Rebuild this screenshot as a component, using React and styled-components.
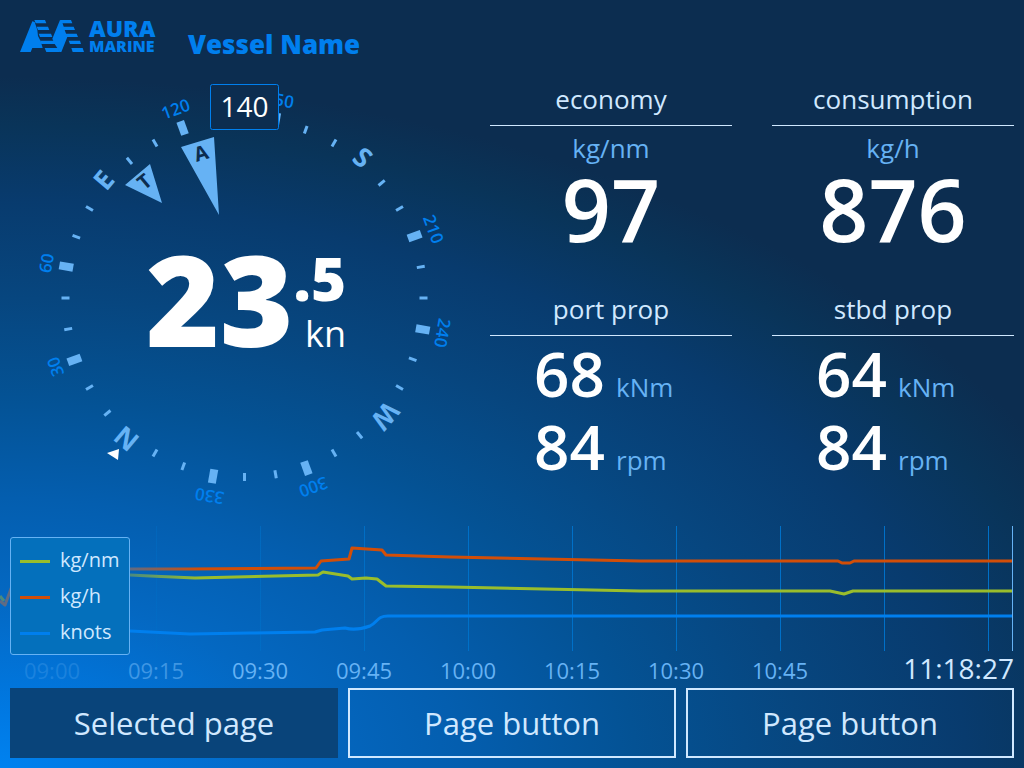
import React from "react";
import styled, { createGlobalStyle } from "styled-components";

const text = '"Open Sans", "Noto Sans", sans-serif';

const GlobalStyle = createGlobalStyle`
  * { box-sizing: border-box; }
  body {
    margin: 0;
    font-family: ${text};
    color: #d0e8ff;
    background: #0c2d50;
  }
`;

const Screen = styled.div`
  display: flex;
  flex-direction: column;
  min-height: 100vh;
  padding: 18px 10px 10px;
  overflow: hidden;
  background: radial-gradient(
    ellipse 115% 90% at 0% 100%,
    #0082f0 0%,
    #0079e3 8%,
    #0468c2 25%,
    #045eaf 39%,
    #045294 54%,
    #07467f 68%,
    #083b6e 82%,
    #093459 93%,
    #0c2d50 100%
  );
`;

const Header = styled.header`
  display: flex;
  height: 42px;
  padding-left: 10px;
  color: #007fee;
`;

const LogoMark = styled.svg`
  width: 64px;
  height: 36px;
  fill: currentColor;
`;

const Wordmark = styled.div`
  width: 68px;
  margin-left: 5px;
  font-weight: 800;
`;

const WordLine = styled.div`
  font-size: ${(p) => p.$size}px;
  line-height: ${(p) => p.$height}px;
`;

const Title = styled.h1`
  margin: 8px 0 0 31px;
  font-size: 26px;
  line-height: 36px;
  font-weight: 800;
`;

const Main = styled.main`
  display: grid;
  grid-template-columns: 480fr 524fr;
  flex: 1;
`;

const Compass = styled.section`
  display: grid;
  grid-template-columns: 470px;
  grid-template-rows: 456px;
`;

const Dial = styled.svg`
  grid-area: 1 / 1;
  width: 470px;
  height: 456px;
`;

const Speed = styled.div`
  grid-area: 1 / 1;
  display: flex;
  justify-content: center;
  padding: 172px 0 0 2px;
  color: #fff;
`;

const SpeedWhole = styled.span`
  font: 800 126px/132px ${text};
`;

const SpeedSide = styled.div`
  display: flex;
  flex-direction: column;
  align-items: flex-end;
  padding-top: 14px;
`;

const SpeedTenth = styled.span`
  font: 800 60px/64px ${text};
`;

const SpeedUnit = styled.span`
  font: 400 36px/48px ${text};
`;

const Readings = styled.section`
  display: grid;
  grid-template-columns: 1fr 1fr;
  grid-template-rows: 210px 1fr;
  column-gap: 40px;
  padding-top: 20px;
`;

const Reading = styled.article`
  display: flex;
  flex-direction: column;
  align-items: center;
`;

const ReadingName = styled.h2`
  align-self: stretch;
  margin: 0;
  height: 46px;
  border-bottom: 1px solid #d0e8ff;
  font: 400 26px/38px ${text};
  text-align: center;
`;

const Unit = styled.span`
  font: 400 26px/44px ${text};
  color: #66b2f4;
`;

const BigValue = styled.span`
  font: 600 86px/78px ${text};
  color: #fff;
`;

const ValueLine = styled.div`
  display: grid;
  grid-template-columns: 72px 72px;
  column-gap: 10px;
  align-items: baseline;
  height: 73px;
`;

const Value = styled.span`
  font: 600 62px/74px ${text};
  color: #fff;
`;

const History = styled.section`
  display: grid;
  grid-template-rows: 126px 36px;
  margin: 0 -10px;
`;

const Plot = styled.svg`
  grid-area: 1 / 1;
  width: 100%;
  height: 126px;
`;

const Legend = styled.ul`
  grid-area: 1 / 1;
  justify-self: start;
  z-index: 1;
  display: flex;
  flex-direction: column;
  width: 120px;
  height: 118px;
  margin: 11px 0 0 10px;
  padding: 3px 9px;
  list-style: none;
  border: 1px solid #66b2f4;
  border-radius: 3px;
  background: #0470bc;
`;

const LegendItem = styled.li`
  display: flex;
  align-items: center;
  gap: 10px;
  height: 36px;
  font-size: 20px;
`;

const Swatch = styled.i`
  width: 30px;
  height: 3px;
  margin-top: 4px;
  background: ${(p) => p.$color};
`;

const Times = styled.div`
  grid-area: 2 / 1;
  display: flex;
  justify-content: space-between;
  align-items: baseline;
  height: 36px;
  padding-right: 10px;
`;

const TimeRow = styled.div`
  display: grid;
  grid-template-columns: repeat(8, 104px);
  font: 400 22px/32px ${text};
  text-align: center;
  color: #66b2f4;
`;

const Tick = styled.span`
  opacity: ${(p) => p.$fade};
`;

const Clock = styled.time`
  font: 400 28px/32px ${text};
`;

const Pages = styled.nav`
  display: grid;
  grid-template-columns: repeat(3, 1fr);
  gap: 10px;
`;

const PageButton = styled.button`
  height: 70px;
  padding: 0;
  border: 2px solid ${(p) => (p.$selected ? "#09447a" : "#d0e8ff")};
  background: ${(p) => (p.$selected ? "#09447a" : "transparent")};
  color: #d0e8ff;
  font: 400 31px/40px ${text};
`;

const CX = 234.5;
const CY = 238;
const HEADING = 140;
const bearings = Array.from({ length: 36 }, (_, i) => i * 10);
const cardinals = { 0: "N", 90: "E", 180: "S", 270: "W" };

function CompassDial() {
  return (
    <Dial viewBox="0 0 470 456" role="img" aria-label="Heading 140">
      {bearings.map((b) => {
        const turn = `rotate(${b - HEADING} ${CX} ${CY})`;
        if (cardinals[b]) {
          return (
            <text key={b} transform={turn} x={CX} y={CY - 174} textAnchor="middle" fontSize="27" fontWeight="700" fill="#66b2f4">
              {cardinals[b]}
            </text>
          );
        }
        if (b % 30 === 0) {
          return (
            <g key={b} transform={turn}>
              <rect x={CX - 4} y={CY - 188} width="8" height="14" fill="#66b2f4" />
              <text x={CX} y={CY - 195} textAnchor="middle" fontSize="17" fontWeight="600" fill="#007fee">
                {b}
              </text>
            </g>
          );
        }
        return <rect key={b} transform={turn} x={CX - 1.5} y={CY - 183} width="3" height="8" fill="#66b2f4" />;
      })}
      <path d="M171 87 204 77 209 155Z M115 125 140 104 152 143Z" fill="#66b2f4" />
      <g fill="#0c2d50" fontSize="20" fontWeight="700" textAnchor="middle">
        <text transform="translate(193 100) rotate(-17)">A</text>
        <text transform="translate(139 127) rotate(-40)">T</text>
      </g>
      <path d="M97 393 109 389 108 400Z" fill="#fff" />
      <rect x="200.5" y="24.5" width="68" height="45" rx="2" fill="#0c2d50" stroke="#007fee" />
      <text x="234.5" y="57" textAnchor="middle" fontSize="28" fill="#fff">
        {HEADING}
      </text>
    </Dial>
  );
}

function Logo() {
  return (
    <LogoMark viewBox="60 54 192 108" aria-hidden="true">
      <path d="M60 156 97 64 104 66 112 90 114 108 122 124 128 144H97L92 156Z" />
      <path d="M103 60H135L139 70H107ZM110 80H144L148 90H114ZM116 101H153L157 111H120ZM120 122H164L167 132H124ZM134 144H175L178 156H139Z" />
      <path d="M180 60H213L217 70H184ZM187 80H221L225 90H191ZM196 101H230L234 111H200ZM206 122H240L243 132H210ZM214 144H248L252 156H218Z" />
      <path d="M180 60 157 116 164 132 172 144 178 156H184L202 111 194 90 186 64Z" />
    </LogoMark>
  );
}

const series = {
  knots: "M130 105 L190 108 250 107 315 106 322 104 345 102 Q356 105 370 100 C378 96 377 90 388 90 H1012",
  consumption:
    "M0 75 5 79 12 60 M130 43 L190 43 316 42 321 35 349 33 352 22 382 24 386 29 450 31 640 35 H838 L842 37 H850 L854 35 H1012",
  economy:
    "M0 70 4 75 M130 49 L150 50 195 52 318 49 323 46 348 50 352 53 366 52 377 53 386 60 450 61 640 65 H830 L844 68 853 65 H1012",
};

const grid = [156, 260, 364, 468, 572, 676, 780, 884, 988];

function HistoryPlot() {
  return (
    <Plot viewBox="0 0 1024 126" preserveAspectRatio="none" aria-hidden="true">
      <defs>
        <linearGradient id="fade" gradientUnits="userSpaceOnUse" x1="120" x2="400" y1="0" y2="0">
          <stop offset="0" stopColor="#0070c8" stopOpacity="0.3" />
          <stop offset="1" stopColor="#0070c8" />
        </linearGradient>
        <linearGradient id="orange" gradientUnits="userSpaceOnUse" x1="130" x2="200" y1="0" y2="0">
          <stop offset="0" stopColor="#5f6b84" />
          <stop offset="1" stopColor="#d24e08" />
        </linearGradient>
        <linearGradient id="green" gradientUnits="userSpaceOnUse" x1="130" x2="200" y1="0" y2="0">
          <stop offset="0" stopColor="#4a8a80" />
          <stop offset="1" stopColor="#99bd2c" />
        </linearGradient>
      </defs>
      {grid.map((x) => (
        <rect key={x} x={x} y="0" width="1" height="125" fill="url(#fade)" />
      ))}
      <rect x="1012" y="0" width="1" height="125" fill="#66b2f4" />
      <g fill="none" strokeWidth="3" strokeLinejoin="round">
        <path d={series.knots} stroke="#007fee" />
        <path d={series.economy} stroke="url(#green)" />
        <path d={series.consumption} stroke="url(#orange)" />
      </g>
    </Plot>
  );
}

const times = [
  ["09:00", 0.25],
  ["09:15", 0.6],
  ["09:30", 1],
  ["09:45", 1],
  ["10:00", 1],
  ["10:15", 1],
  ["10:30", 1],
  ["10:45", 1],
];

const totals = [
  { name: "economy", unit: "kg/nm", value: 97 },
  { name: "consumption", unit: "kg/h", value: 876 },
];

const propellers = [
  { name: "port prop", torque: 68, speed: 84 },
  { name: "stbd prop", torque: 64, speed: 84 },
];

export default function App() {
  return (
    <>
      <GlobalStyle />
      <Screen>
        <Header>
          <Logo />
          <Wordmark>
            <WordLine $size={23} $height={20}>AURA</WordLine>
            <WordLine $size={16} $height={16}>MARINE</WordLine>
          </Wordmark>
          <Title>Vessel Name</Title>
        </Header>
        <Main>
          <Compass>
            <CompassDial />
            <Speed>
              <SpeedWhole>23</SpeedWhole>
              <SpeedSide>
                <SpeedTenth>.5</SpeedTenth>
                <SpeedUnit>kn</SpeedUnit>
              </SpeedSide>
            </Speed>
          </Compass>
          <Readings>
            {totals.map((t) => (
              <Reading key={t.name}>
                <ReadingName>{t.name}</ReadingName>
                <Unit>{t.unit}</Unit>
                <BigValue>{t.value}</BigValue>
              </Reading>
            ))}
            {propellers.map((p) => (
              <Reading key={p.name}>
                <ReadingName>{p.name}</ReadingName>
                <ValueLine>
                  <Value>{p.torque}</Value>
                  <Unit>kNm</Unit>
                </ValueLine>
                <ValueLine>
                  <Value>{p.speed}</Value>
                  <Unit>rpm</Unit>
                </ValueLine>
              </Reading>
            ))}
          </Readings>
        </Main>
        <History>
          <HistoryPlot />
          <Legend>
            <LegendItem><Swatch $color="#99bd2c" />kg/nm</LegendItem>
            <LegendItem><Swatch $color="#d24e08" />kg/h</LegendItem>
            <LegendItem><Swatch $color="#007fee" />knots</LegendItem>
          </Legend>
          <Times>
            <TimeRow>
              {times.map(([t, fade]) => (
                <Tick key={t} $fade={fade}>{t}</Tick>
              ))}
            </TimeRow>
            <Clock>11:18:27</Clock>
          </Times>
        </History>
        <Pages>
          <PageButton $selected aria-current="page">Selected page</PageButton>
          <PageButton>Page button</PageButton>
          <PageButton>Page button</PageButton>
        </Pages>
      </Screen>
    </>
  );
}
